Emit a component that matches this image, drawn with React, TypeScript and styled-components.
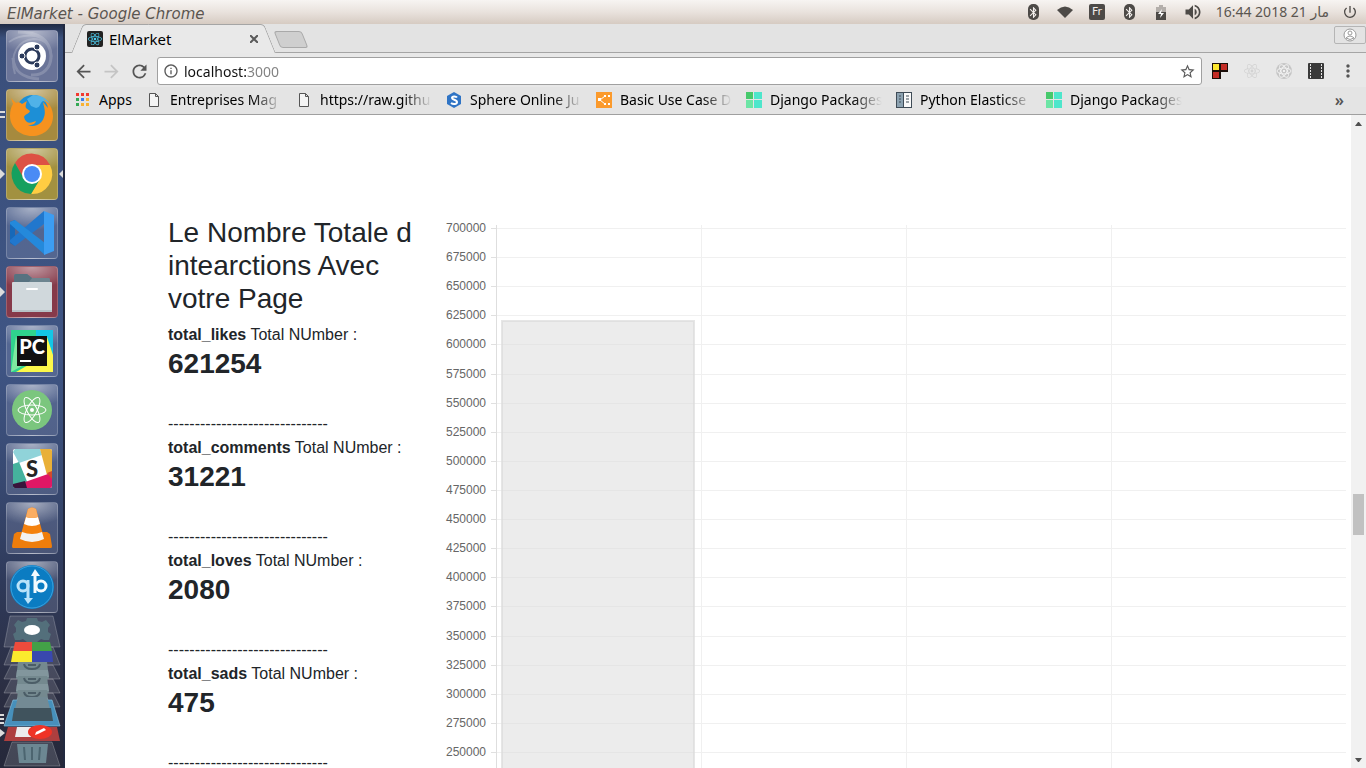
import React from "react";
import styled, { createGlobalStyle, css } from "styled-components";
import {
  MdArrowBack,
  MdArrowForward,
  MdBluetooth,
  MdInfoOutline,
  MdMoreVert,
  MdPowerSettingsNew,
  MdRefresh,
  MdStarBorder,
  MdVolumeUp,
} from "react-icons/md";
import { FaReact } from "react-icons/fa";

const uiFont = `"Noto Sans", "Open Sans", sans-serif`;
const pageFont = `"Liberation Sans", Arial, sans-serif`;

const GlobalStyle = createGlobalStyle`
  *, *::before, *::after { box-sizing: border-box; }
  body { margin: 0; background: #fff; overflow: hidden; }
  button { margin: 0; padding: 0; border: 0; background: none; color: inherit; font: inherit; }
  svg { display: block; flex: none; }
`;

const Desktop = styled.div`
  display: flex;
  flex-direction: column;
  height: 100vh;
  overflow: hidden;
  font-family: ${uiFont};
`;

/* ---------- system panel ---------- */

const Panel = styled.header`
  flex: none;
  display: flex;
  align-items: center;
  justify-content: space-between;
  height: 24px;
  padding: 0 8px 0 7px;
  background: linear-gradient(#f7f4f2, #e9e2dd 50%, #d6cbc2);
  color: #5a5550;
`;

const WindowTitle = styled.span`
  padding-top: 3px;
  font: italic 15px/20px "DejaVu Sans", sans-serif;
  white-space: nowrap;
`;

const Indicators = styled.div`
  display: flex;
  align-items: center;
  gap: 16px;
`;

const Indicator = styled.button`
  display: flex;
  align-items: center;
  justify-content: center;
  width: 16px;
  height: 16px;
  color: #4d4a47;
`;

const BluetoothBadge = styled.span`
  display: flex;
  align-items: center;
  justify-content: center;
  width: 11px;
  height: 16px;
  border-radius: 5px;
  background: #4d4a47;
  color: #f3efec;
`;

const LanguageBadge = styled.span`
  width: 16px;
  height: 16px;
  border-radius: 2px;
  background: #4d4a47;
  color: #f0ece9;
  font: 11px/16px "DejaVu Sans", sans-serif;
  text-align: center;
`;

const Clock = styled.time`
  direction: rtl;
  width: 115px;
  margin: 0 -3px;
  font: 14px/20px "Noto Sans", "DejaVu Sans", sans-serif;
  white-space: nowrap;
`;

/* ---------- launcher ---------- */

const Workspace = styled.div`
  flex: 1;
  display: flex;
  min-height: 0;
`;

const Launcher = styled.nav`
  flex: none;
  width: 65px;
  padding-top: 6px;
  border-right: 2px solid #22293f;
  background: linear-gradient(#202b45, #3a4f7b 14px, #3f5584 45%, #384a73 60%, #2f3a5a 75%, #2b2e42 90%, #25283a);
  display: flex;
  flex-direction: column;
  gap: 7px;
  overflow: hidden;
`;

const Tile = styled.button<{ $tint: string }>`
  position: relative;
  flex: none;
  width: 52px;
  height: 52px;
  margin-left: 6px;
  border: 1px solid rgba(255, 255, 255, 0.2);
  border-radius: 4px;
  background: radial-gradient(ellipse 40px 22px at 50% 0, rgba(255, 255, 255, 0.5), rgba(255, 255, 255, 0)), ${(p) => p.$tint};

  > svg {
    margin: -1px;
  }
`;

const Marker = styled.i<{ $side: "left" | "right" }>`
  position: absolute;
  top: 20px;
  border: 5px solid transparent;
  ${(p) =>
    p.$side === "left"
      ? css`
          left: -7px;
          border-left-color: #dcdcdc;
          border-right-width: 0;
        `
      : css`
          right: -7px;
          border-right-color: #dcdcdc;
          border-left-width: 0;
        `}
`;

const DoubleMarker = styled.i`
  position: absolute;
  left: -7px;
  top: 21px;
  width: 5px;
  height: 7px;
  border: solid #dcdcdc;
  border-width: 2px 0;
`;

const FoldedStack = styled.svg`
  margin-top: -7px;
`;

/* ---------- browser ---------- */

const Browser = styled.main`
  flex: 1;
  min-width: 0;
  display: flex;
  flex-direction: column;
`;

const TabStrip = styled.div`
  flex: none;
  display: flex;
  align-items: flex-start;
  height: 29px;
  padding-left: 12px;
  border-bottom: 1px solid #a5a5a5;
  background: #e3e3e3;
`;

const Tab = styled.div`
  position: relative;
  display: flex;
  align-items: center;
  width: 193px;
  height: 29px;
  padding: 1px 12px 0 10px;
  isolation: isolate;

  &::before,
  &::after {
    content: "";
    position: absolute;
    z-index: -1;
    top: 0;
    bottom: 0;
    width: 60%;
    background: #e9e9e9;
    border-top: 1px solid #a5a5a5;
  }
  &::before {
    left: 0;
    border-left: 1px solid #a5a5a5;
    border-top-left-radius: 4px;
    transform: skewX(-22deg);
  }
  &::after {
    right: 0;
    border-right: 1px solid #a5a5a5;
    border-top-right-radius: 4px;
    transform: skewX(22deg);
  }
`;

const TabFavicon = styled.span`
  display: flex;
  align-items: center;
  justify-content: center;
  width: 16px;
  height: 16px;
  border-radius: 2px;
  background: #222;
  color: #4fd2f5;
`;

const TabTitle = styled.span`
  flex: 1;
  margin-left: 6px;
  font-size: 15px;
  line-height: 20px;
  color: #000;
`;

const CloseTab = styled.button`
  display: flex;
  width: 8px;
  height: 8px;
  color: #5a5a5a;
`;

const NewTab = styled.button`
  width: 28px;
  height: 17px;
  margin: 7px 0 0 7px;
  border: 1px solid #a9a9a9;
  border-radius: 3px;
  background: #cfcfcf;
  transform: skewX(22deg);
`;

const ProfileButton = styled.button`
  display: flex;
  align-items: center;
  justify-content: center;
  width: 32px;
  height: 18px;
  margin: 2px 0 0 auto;
  border: 1px solid #b5b5b5;
  border-radius: 2px;
`;

const Toolbar = styled.div`
  flex: none;
  display: flex;
  align-items: center;
  gap: 6px;
  height: 34px;
  padding: 2px 10px 0 7px;
  background: #e8e8e8;
`;

const NavButton = styled.button`
  display: flex;
  align-items: center;
  justify-content: center;
  width: 22px;
  height: 22px;
  color: #555;

  &:disabled {
    color: #c4c4c4;
  }
`;

const AddressBar = styled.label`
  flex: 1;
  display: flex;
  align-items: center;
  gap: 5px;
  height: 28px;
  margin-left: 1px;
  padding: 0 5px;
  border: 1px solid #a0a0a0;
  border-radius: 3px;
  background: #fff;
  color: #5a5a5a;
`;

const AddressInput = styled.input`
  flex: 1;
  min-width: 0;
  height: 22px;
  padding: 0;
  border: 0;
  outline: 0;
  font: 14px/20px ${uiFont};
  color: transparent;
  background: linear-gradient(90deg, #111 62px, #808080 62px);
  -webkit-background-clip: text;
  background-clip: text;
`;

const Extensions = styled.div`
  display: flex;
  gap: 16px;
  margin-left: 4px;
`;

const ExtensionButton = styled.button`
  display: flex;
  align-items: center;
  justify-content: center;
  width: 16px;
  height: 16px;
  color: #555;
`;

const BookmarkBar = styled.nav`
  flex: none;
  display: flex;
  align-items: center;
  height: 28px;
  padding: 0 22px 2px 11px;
  border-bottom: 1px solid #9f9f9f;
  background: #e4e4e4;
`;

const BookmarkLink = styled.a<{ $clip?: boolean }>`
  display: flex;
  align-items: center;
  gap: 8px;
  margin-right: 14px;
  color: #000;
  font-size: 14px;
  line-height: 20px;
  text-decoration: none;
  white-space: nowrap;

  span {
    overflow: hidden;
    ${(p) =>
      p.$clip &&
      css`
        width: 112px;
        mask-image: linear-gradient(90deg, #000 74%, transparent);
      `}
  }
`;

const AppsLink = styled(BookmarkLink)`
  width: 56px;
`;

const MoreBookmarks = styled.button`
  margin-left: auto;
  font-size: 16px;
  font-weight: 600;
  line-height: 20px;
  color: #555;
`;

/* ---------- page ---------- */

const Viewport = styled.div`
  flex: 1;
  display: flex;
  min-height: 0;
  background: #fff;
`;

const Page = styled.div`
  flex: 1;
  min-width: 0;
  display: flex;
  padding: 101px 5px 0 103px;
  overflow: hidden;
`;

const Summary = styled.section`
  flex: none;
  width: 263px;
  color: #212529;
  font: 16px/24px ${pageFont};
`;

const Heading = styled.h3`
  margin: 0 0 8px;
  font-size: 28px;
  font-weight: 400;
  line-height: 33px;
`;

const Separator = styled.div`
  white-space: nowrap;
`;

const StatValue = styled.div`
  margin-bottom: 32px;
  font-size: 28px;
  font-weight: 700;
  line-height: 33px;
`;

const Chart = styled.svg`
  flex: 1;
  min-width: 0;
  height: 700px;
  font: 12px ${pageFont};
`;

const Scrollbar = styled.div`
  flex: none;
  display: flex;
  flex-direction: column;
  align-items: center;
  width: 15px;
  background: #f1f1f1;
`;

const ScrollButton = styled.button`
  display: flex;
  align-items: center;
  justify-content: center;
  width: 15px;
  height: 17px;
`;

const ScrollGap = styled.div<{ $share: number }>`
  flex: ${(p) => p.$share};
`;

const ScrollThumb = styled.div`
  width: 11px;
  height: 41px;
  background: #c1c1c1;
`;

/* ---------- launcher icons ---------- */

const Icon = ({ children }: { children: React.ReactNode }) => (
  <svg width="52" height="52" viewBox="0 0 52 52" aria-hidden="true">
    {children}
  </svg>
);

const UbuntuIcon = () => (
  <Icon>
    <g fill="none" stroke="#fff" opacity="0.18">
      <path d="M9 44C3 24 12 10 28 9c13 0 19 9 17 21" strokeWidth="2" />
      <path d="M12 2c18 0 32 6 33 24 0 12-8 20-20 19" strokeWidth="3" />
      <path d="M7 28c1 14 10 20 26 21" strokeWidth="3" />
      <path d="M3 12C14 4 34 2 42 14" strokeWidth="2" />
    </g>
    <circle cx="26" cy="26" r="14" fill="#fff" />
    <circle cx="26" cy="26" r="7" fill="none" stroke="#2b3a5a" strokeWidth="3" />
    <g fill="#2b3a5a" stroke="#fff" strokeWidth="1">
      <circle cx="16" cy="26" r="3" />
      <circle cx="31" cy="17" r="3" />
      <circle cx="31" cy="35" r="3" />
    </g>
  </Icon>
);

const FirefoxIcon = () => (
  <Icon>
    <circle cx="27" cy="23" r="17" fill="#1d8fd6" />
    <path d="M27 6c8 0 13 3 16 8l-6-2c-4 3-2 6-7 7l-5-2-4-7z" fill="#50b2e8" />
    <path d="M5 9l5 5c2-1 4-1 6 1l5-3c-1 3-2 5-1 7l4 3c-1 3-5 3-6 6 1 5 5 7 9 5l3-1c-1 4-5 4-8 4 7 3 14-1 16-8 2-5 0-10-1-15l5 6c-1-4-2-6-5-9 6 3 10 10 10 17 0 12-9 20-21 20S4 38 4 27c0-5 1-9 3-12z" fill="#f6921e" />
  </Icon>
);

const ChromeIcon = () => (
  <Icon>
    <path d="M9 15A20 20 0 0 1 44 17H26V26L18 31Z" fill="#dd5144" />
    <path d="M44 17A20 20 0 0 1 25 46L34 31 26 26V17Z" fill="#ffcd42" />
    <path d="M25 46A20 20 0 0 1 9 15L18 31 26 26 34 31Z" fill="#16a05f" />
    <circle cx="26" cy="26" r="10" fill="#fff" />
    <circle cx="26" cy="26" r="8" fill="#4a8bf5" />
  </Icon>
);

const VsCodeIcon = () => (
  <Icon>
    <path d="M4 15l5-2v26l-5-3z" fill="#1768b8" />
    <path d="M38 4v13L9 39l-5-4v-2z" fill="#2177cd" />
    <path d="M4 15l5-2 30 23v12L4 17z" fill="#2489db" />
    <path d="M38 4l10 4v36l-10 4z" fill="#3c9df2" />
  </Icon>
);

const FilesIcon = () => (
  <Icon>
    <path d="M8 20V10q0-2 2-2h11l5 4h17q1 0 1 2v6z" fill="#6d8590" />
    <path d="M21 8l5 4-3 4H8v-6q0-2 2-2z" fill="#577280" />
    <rect x="6" y="16" width="40" height="30" rx="1" fill="#d0d8dc" />
    <rect x="6" y="44" width="40" height="2" fill="#b7c1c6" />
    <rect x="20" y="22" width="12" height="2" rx="1" fill="#fff" />
  </Icon>
);

const PyCharmIcon = () => (
  <Icon>
    <rect x="5" y="5" width="42" height="42" fill="#2fd38d" />
    <path d="M30 5h17v25L30 14z" fill="#13c6e6" />
    <path d="M41 12l6 18v17H10l14-8z" fill="#fcf84a" />
    <path d="M5 47l5-36 6 30z" fill="#7fe8a0" />
    <rect x="11" y="11" width="30" height="30" fill="#111" />
    <text x="26" y="29" textAnchor="middle" fill="#fff" fontFamily="Lato, sans-serif" fontWeight="900" fontSize="20">
      PC
    </text>
    <rect x="14" y="35" width="11" height="2" fill="#fff" />
  </Icon>
);

const AtomIcon = () => (
  <Icon>
    <circle cx="26" cy="26" r="20" fill="#7bc67e" />
    <g fill="none" stroke="#fff" strokeWidth="1">
      <ellipse cx="26" cy="26" rx="14" ry="5" />
      <ellipse cx="26" cy="26" rx="14" ry="5" transform="rotate(62 26 26)" />
      <ellipse cx="26" cy="26" rx="14" ry="5" transform="rotate(118 26 26)" />
    </g>
    <circle cx="26" cy="26" r="2" fill="#fff" />
  </Icon>
);

const SlackIcon = () => (
  <Icon>
    <rect x="7" y="6" width="39" height="39" rx="2" fill="#fff" />
    <path d="M9 6h25l2 6-23 8-6-11z" fill="#90d3d9" />
    <path d="M34 6h10q2 0 2 2v21l-5 3z" fill="#e9b038" />
    <path d="M7 21l6-2 9 22-15 4z" fill="#45b29d" />
    <path d="M19 39l23-8 4 1v11q0 2-2 2H20z" fill="#e01765" />
    <path d="M7 41l12-3 2 7H9q-2 0-2-2z" fill="#39143c" />
    <path d="M41 30l5-2v8z" fill="#d24a2c" />
    <text x="26" y="34" textAnchor="middle" fill="#252525" fontFamily="Lato, sans-serif" fontWeight="900" fontSize="22">
      S
    </text>
  </Icon>
);

const VlcIcon = () => (
  <Icon>
    <path d="M11 30h30l3 2 2 12q0 2-1 2H7q-1 0-1-2l2-12z" fill="#ee7d0b" />
    <path d="M22 7q4-3 8 0l8 29q-12 8-24 0z" fill="#f4820e" />
    <path d="M20 15q6 2 12 0l2 7q-8 4-16 0z" fill="#fff" />
    <path d="M16 30q10 4 20 0l2 7q-12 6-24 0z" fill="#f2f2f2" />
    <path d="M22 7q4-3 8 0l2 8q-6 2-12 0z" fill="#faad62" />
  </Icon>
);

const QbIcon = () => (
  <Icon>
    <circle cx="26" cy="26" r="22" fill="#0b7cc2" />
    <circle cx="26" cy="26" r="21" fill="none" stroke="#3aa0dc" strokeWidth="1" />
    <g fill="none" strokeWidth="3">
      <circle cx="17" cy="25" r="5" stroke="#b9e3fa" />
      <path d="M22 19v19" stroke="#b9e3fa" />
      <circle cx="35" cy="25" r="5" stroke="#f2fafe" />
      <path d="M29 32V14" stroke="#f2fafe" />
    </g>
    <path d="M18 37h9l-5 6z" fill="#b9e3fa" />
    <path d="M25 15h9l-5-7z" fill="#f2fafe" />
  </Icon>
);

const stackedDisks = [49, 63, 77];

const LauncherStack = () => (
  <FoldedStack width="63" height="155" viewBox="0 0 63 155" aria-hidden="true">
    <g fill="#fff" fillOpacity="0.13" stroke="#fff" strokeOpacity="0.22">
      <path d="M10 3h43l7 31H4z" />
      <path d="M11 34h42l7 18H4z" />
      <path d="M11 52h42l7 14H4z" />
      <path d="M11 66h42l7 14H4z" />
      <path d="M11 80h42l7 14H4z" />
    </g>
    <path d="M27 5h10l1 3 4 1 4-2 4 5-2 3v4l3 2-2 6h-5l-3-1-4 3H27l-4-3-3 1h-5l-2-6 3-2v-4l-2-3 4-5 4 2 4-1z" fill="#536f7b" />
    <ellipse cx="32" cy="17" rx="8" ry="5" fill="#fff" />
    <path d="M15 29h17v9H13z" fill="#ee4b3c" />
    <path d="M32 29h18l2 9H32z" fill="#43a047" />
    <path d="M13 38h19v11H11z" fill="#fbea2d" />
    <path d="M32 38h20l1 11H32z" fill="#3948ae" />
    {stackedDisks.map((y) => (
      <g key={y} transform={`translate(0 ${y})`}>
        <path d="M18 0h29l2 17H16z" fill="#74898f" />
        <path d="M24 2q1 5 8 5t8-5" fill="none" stroke="#4b5d67" strokeWidth="2" />
        <path d="M28 2h8v2h-8z" fill="#4b5d67" />
        <path d="M17 8h31l1 7H16z" fill="#82969d" />
      </g>
    ))}
    <path d="M13 87h39l8 26H4z" fill="#4790bb" stroke="#8cc4e2" strokeOpacity="0.6" />
    <path d="M18 84h29l4 16H14z" fill="#738a94" />
    <path d="M14 95h37l2 13H12z" fill="#40535d" />
    <path d="M8 114h49l3 14H4z" fill="#ad3f3f" />
    <path d="M17 114h14v10H15z" fill="#ececec" />
    <ellipse cx="40" cy="119" rx="12" ry="7" fill="#ef3326" />
    <path d="M35 122l1-3 8-4 2 2-8 4z" fill="#fff" />
    <path d="M12 129h40l8 24H4z" fill="#fff" fillOpacity="0.14" stroke="#fff" strokeOpacity="0.22" />
    <path d="M17 131h31l-2 19H19z" fill="#6c8792" />
    <path d="M24 134l1 13M32 134v13M40 134l-1 13" stroke="#4c6570" strokeWidth="2" />
    <path d="M0 102h4M0 106h4M0 110h4" stroke="#dcdcdc" strokeWidth="2" />
    <path d="M0 116l5 4-5 4z" fill="#dcdcdc" />
  </FoldedStack>
);

type Mark = "none" | "running" | "active" | "double";

const glass = "rgba(150, 160, 190, 0.25)";

const launcherApps: { name: string; tint: string; mark: Mark; icon: React.ReactNode }[] = [
  { name: "Search your computer", tint: "#6a7498", mark: "none", icon: <UbuntuIcon /> },
  { name: "Firefox", tint: "#a68a3e", mark: "double", icon: <FirefoxIcon /> },
  { name: "Google Chrome", tint: "#a29140", mark: "active", icon: <ChromeIcon /> },
  { name: "Visual Studio Code", tint: glass, mark: "none", icon: <VsCodeIcon /> },
  { name: "Files", tint: "#863a4a", mark: "running", icon: <FilesIcon /> },
  { name: "PyCharm", tint: glass, mark: "none", icon: <PyCharmIcon /> },
  { name: "Atom", tint: glass, mark: "none", icon: <AtomIcon /> },
  { name: "Slack", tint: glass, mark: "none", icon: <SlackIcon /> },
  { name: "VLC", tint: glass, mark: "none", icon: <VlcIcon /> },
  { name: "qBittorrent", tint: glass, mark: "none", icon: <QbIcon /> },
];

/* ---------- bookmark icons ---------- */

const SmallIcon = ({ children }: { children: React.ReactNode }) => (
  <svg width="16" height="16" viewBox="0 0 16 16" aria-hidden="true">
    {children}
  </svg>
);

const AppsIcon = () => (
  <svg width="15" height="14" viewBox="0 0 15 14" aria-hidden="true">
    {["#f23a30", "#f23a30", "#f23a30", "#35a854", "#3b7ded", "#f9b233", "#35a854", "#f9b233", "#f9b233"].map((fill, i) => (
      <rect key={i} x={(i % 3) * 5} y={Math.floor(i / 3) * 5} width="3" height="3" fill={fill} />
    ))}
  </svg>
);

const DocIcon = () => (
  <SmallIcon>
    <path d="M3.5 1.5h6l3 3v10h-9zM9.5 1.5v3h3" fill="#f4f4f4" stroke="#555" />
  </SmallIcon>
);

const SphereIcon = () => (
  <SmallIcon>
    <path d="M8 0l7 4v8l-7 4-7-4V4z" fill="#2f74c5" />
    <path d="M11 5.500C10 4 6 4 6 6s5 1.500 5 4-4 2.500-6 1" fill="none" stroke="#fff" strokeWidth="2" />
  </SmallIcon>
);

const UseCaseIcon = () => (
  <SmallIcon>
    <rect width="16" height="16" fill="#fb9a2c" />
    <path d="M4 8l5-4M4 8l5 4" fill="none" stroke="#fff" />
    <g fill="#fff">
      <rect x="2" y="6" width="3" height="3" />
      <rect x="8" y="3" width="2" height="2" />
      <rect x="12" y="3" width="2" height="2" />
      <rect x="8" y="11" width="2" height="2" />
      <rect x="12" y="11" width="2" height="2" />
    </g>
  </SmallIcon>
);

const DjangoIcon = () => (
  <SmallIcon>
    <rect width="7" height="7" fill="#46c96b" />
    <rect x="8" width="8" height="7" fill="#4ee6cb" />
    <rect y="8" width="7" height="8" fill="#6ce5a5" />
    <rect x="8" y="8" width="8" height="8" fill="#4ee6cb" />
  </SmallIcon>
);

const PythonIcon = () => (
  <SmallIcon>
    <rect width="16" height="16" fill="#3f4c57" />
    <rect x="1" y="1" width="6" height="14" fill="#8ca2b1" />
    <rect x="8" y="1" width="7" height="14" fill="#fafafa" />
    <path d="M3 4h2M3 7h2M3 10h2M10 4h3M10 7h3M10 10h3" stroke="#3f4c57" strokeWidth="1" />
  </SmallIcon>
);

const bookmarks = [
  { title: "Entreprises Mag", icon: <DocIcon /> },
  { title: "https://raw.githu", icon: <DocIcon /> },
  { title: "Sphere Online Ju", icon: <SphereIcon /> },
  { title: "Basic Use Case D", icon: <UseCaseIcon /> },
  { title: "Django Packages", icon: <DjangoIcon /> },
  { title: "Python Elasticse", icon: <PythonIcon /> },
  { title: "Django Packages", icon: <DjangoIcon /> },
];

/* ---------- page data ---------- */

const stats = [
  { name: "total_likes", value: 621254 },
  { name: "total_comments", value: 31221 },
  { name: "total_loves", value: 2080 },
  { name: "total_sads", value: 475 },
];

const dashes = "-".repeat(30);

const ticks = Array.from({ length: 19 }, (_, i) => ({
  label: String(700000 - i * 25000),
  y: 12 + Math.round((i * 524) / 18),
}));

const InteractionChart = () => (
  <Chart role="img" aria-label="Total interactions">
    <g shapeRendering="crispEdges">
      {ticks.map(({ y }) => (
        <g key={y}>
          <rect x="60" y={y} width="5" height="1" fill="#e0e0e0" />
          <rect x="65" y={y} width="100%" height="1" fill="#f0f0f0" />
        </g>
      ))}
      <rect x="65" y="9" width="1" height="800" fill="#dedede" />
      {[270, 475, 680].map((x) => (
        <rect key={x} x={x} y="9" width="1" height="800" fill="#f0f0f0" />
      ))}
    </g>
    <rect x="71" y="105" width="192" height="720" fill="#dcdcdc" fillOpacity="0.55" stroke="#dcdcdc" strokeOpacity="0.7" strokeWidth="2" />
    <g fill="#666" textAnchor="end">
      {ticks.map(({ label, y }) => (
        <text key={label} x="55" y={y + 4}>
          {label}
        </text>
      ))}
    </g>
  </Chart>
);

const bluetooth = (
  <BluetoothBadge>
    <MdBluetooth size={13} />
  </BluetoothBadge>
);

export default function App() {
  return (
    <Desktop>
      <GlobalStyle />
      <Panel>
        <WindowTitle>ElMarket - Google Chrome</WindowTitle>
        <Indicators>
          <Indicator aria-label="Bluetooth">{bluetooth}</Indicator>
          <Indicator aria-label="Network">
            <svg width="16" height="12" viewBox="0 0 16 12">
              <path d="M0 4q8-7 16 0l-8 8z" fill="currentColor" />
            </svg>
          </Indicator>
          <Indicator aria-label="Keyboard layout">
            <LanguageBadge>Fr</LanguageBadge>
          </Indicator>
          <Indicator aria-label="Bluetooth devices">{bluetooth}</Indicator>
          <Indicator aria-label="Battery">
            <svg width="10" height="15" viewBox="0 0 10 15">
              <path d="M3 0h4v2h3v6H0V2h3z" fill="#b3aeaa" />
              <path d="M0 7h10v8H0z" fill="currentColor" />
              <path d="M6 4L2 9h3l-1 4 4-5H5z" fill="#fff" />
            </svg>
          </Indicator>
          <Indicator aria-label="Sound">
            <MdVolumeUp size={20} />
          </Indicator>
          <Clock>مار 21 2018 16:44</Clock>
          <Indicator aria-label="Session">
            <MdPowerSettingsNew size={16} />
          </Indicator>
        </Indicators>
      </Panel>

      <Workspace>
        <Launcher aria-label="Launcher">
          {launcherApps.map(({ name, tint, mark, icon }) => (
            <Tile key={name} $tint={tint} aria-label={name}>
              {icon}
              {mark === "double" && <DoubleMarker />}
              {(mark === "running" || mark === "active") && <Marker $side="left" />}
              {mark === "active" && <Marker $side="right" />}
            </Tile>
          ))}
          <LauncherStack />
        </Launcher>

        <Browser>
          <TabStrip>
            <Tab>
              <TabFavicon>
                <FaReact size={14} />
              </TabFavicon>
              <TabTitle>ElMarket</TabTitle>
              <CloseTab aria-label="Close tab">
                <svg width="8" height="8" viewBox="0 0 8 8">
                  <path d="M0 0l8 8M8 0L0 8" stroke="currentColor" strokeWidth="2" />
                </svg>
              </CloseTab>
            </Tab>
            <NewTab aria-label="New tab" />
            <ProfileButton aria-label="Profile">
              <svg width="14" height="14" viewBox="0 0 14 14" fill="#fff" stroke="#999">
                <circle cx="7" cy="7" r="6" />
                <circle cx="7" cy="5" r="2" />
                <path d="M3 10q4-4 8 0-4 3-8 0z" />
              </svg>
            </ProfileButton>
          </TabStrip>

          <Toolbar>
            <NavButton aria-label="Back">
              <MdArrowBack size={21} />
            </NavButton>
            <NavButton aria-label="Forward" disabled>
              <MdArrowForward size={21} />
            </NavButton>
            <NavButton aria-label="Reload">
              <MdRefresh size={21} />
            </NavButton>
            <AddressBar>
              <MdInfoOutline size={16} />
              <AddressInput aria-label="Address" defaultValue="localhost:3000" />
              <MdStarBorder size={17} />
            </AddressBar>
            <Extensions>
              <ExtensionButton aria-label="Page blocks">
                <SmallIcon>
                  <path d="M0 0h16v9H9v7H0z" fill="#1c0f0a" />
                  <rect x="1" y="1" width="6" height="6" fill="#fde72f" />
                  <rect x="9" y="1" width="6" height="6" fill="#c42d26" />
                  <rect x="1" y="9" width="6" height="6" fill="#c42d26" />
                </SmallIcon>
              </ExtensionButton>
              <ExtensionButton aria-label="React tools">
                <FaReact size={16} color="#d2d2d2" />
              </ExtensionButton>
              <ExtensionButton aria-label="Redux tools">
                <SmallIcon>
                  <circle cx="8" cy="8" r="8" fill="#c6c6c6" />
                  <g fill="none" stroke="#f2f2f2">
                    <ellipse cx="8" cy="8" rx="7" ry="3" />
                    <ellipse cx="8" cy="8" rx="7" ry="3" transform="rotate(60 8 8)" />
                    <ellipse cx="8" cy="8" rx="7" ry="3" transform="rotate(120 8 8)" />
                  </g>
                  <circle cx="8" cy="8" r="1" fill="#fff" />
                </SmallIcon>
              </ExtensionButton>
              <ExtensionButton aria-label="Video tools">
                <SmallIcon>
                  <rect width="16" height="16" rx="1" fill="#3a3a3a" />
                  <path d="M2.5 1v15M13.5 1v15" stroke="#e6e6e6" strokeWidth="1" strokeDasharray="2 1" />
                </SmallIcon>
              </ExtensionButton>
              <ExtensionButton aria-label="Menu">
                <MdMoreVert size={20} />
              </ExtensionButton>
            </Extensions>
          </Toolbar>

          <BookmarkBar aria-label="Bookmarks">
            <AppsLink href="#apps">
              <AppsIcon />
              <span>Apps</span>
            </AppsLink>
            {bookmarks.map(({ title, icon }, i) => (
              <BookmarkLink key={i} href="#bookmark" $clip>
                {icon}
                <span>{title}</span>
              </BookmarkLink>
            ))}
            <MoreBookmarks aria-label="More bookmarks">»</MoreBookmarks>
          </BookmarkBar>

          <Viewport>
            <Page>
              <Summary>
                <Heading>Le Nombre Totale d intearctions Avec votre Page</Heading>
                {stats.map(({ name, value }) => (
                  <div key={name}>
                    <b>{name}</b> Total NUmber :<StatValue>{value}</StatValue>
                    <Separator>{dashes}</Separator>
                  </div>
                ))}
              </Summary>
              <InteractionChart />
            </Page>
            <Scrollbar>
              <ScrollButton aria-label="Scroll up">
                <svg width="7" height="4" viewBox="0 0 7 4">
                  <path d="M0 4h7L4 0H3z" fill="#505050" />
                </svg>
              </ScrollButton>
              <ScrollGap $share={362} />
              <ScrollThumb />
              <ScrollGap $share={216} />
              <ScrollButton aria-label="Scroll down">
                <svg width="7" height="4" viewBox="0 0 7 4">
                  <path d="M0 0h7L4 4H3z" fill="#505050" />
                </svg>
              </ScrollButton>
            </Scrollbar>
          </Viewport>
        </Browser>
      </Workspace>
    </Desktop>
  );
}
